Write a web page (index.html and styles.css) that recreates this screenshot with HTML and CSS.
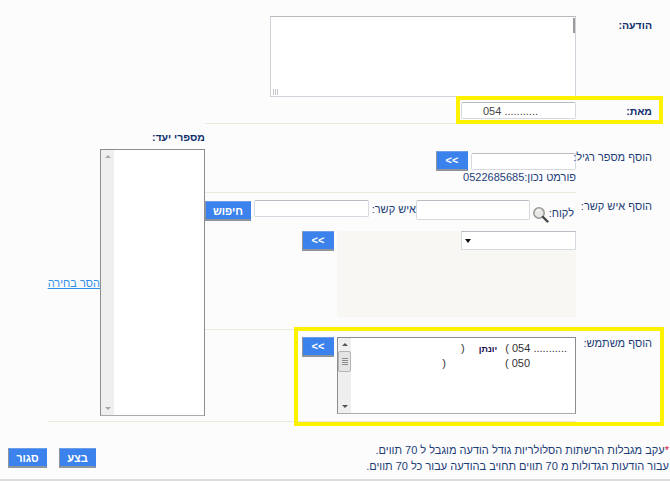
FILE: index.html
```html
<!DOCTYPE html>
<html lang="he" dir="rtl">
<head>
<meta charset="utf-8">
<title>שליחת הודעה</title>
<link rel="stylesheet" href="styles.css">
</head>
<body>
<div class="page">
  <div class="msg-row">
    <div class="label strong">הודעה:</div>
    <div class="msg-box"><textarea class="msg" aria-label="הודעה"></textarea><span class="msg-mark"></span><span class="msg-grip"></span></div>
  </div>
  <div class="from-row">
    <div class="label strong from-label">מאת:</div>
    <div class="from-cell"><input class="field from-input" value="054 ..........." dir="ltr"></div>
  </div>
  <div class="main">
    <div class="label row-a-label">הוסף מספר רגיל:</div>
    <div class="cell row-a">
      <div class="inline">
        <input class="field phone">
        <button class="btn arrow" dir="ltr">&lt;&lt;</button>
      </div>
      <div class="hint">פורמט נכון:0522685685</div>
    </div>
    <div class="target">
      <div class="strong target-title">מספרי יעד:</div>
      <div class="target-body">
        <div class="listbox tall">
          <div class="items"></div>
          <div class="sb faint"><i class="up"></i><i class="down"></i></div>
        </div>
        <a class="remove" href="#">הסר בחירה</a>
      </div>
    </div>
    <div class="label row-b-label">הוסף איש קשר:</div>
    <div class="cell row-b">
      <div class="search">
        <span class="cust-label">לקוח:</span>
        <svg class="mag" width="17" height="17" viewBox="0 0 17 17" aria-hidden="true">
          <circle cx="7" cy="7" r="5.2" fill="#e8e8e6" stroke="#9a9a98" stroke-width="1.6"/>
          <path d="M4.5 5.5a3.5 3.5 0 0 1 3-2" fill="none" stroke="#fff" stroke-width="1.2"/>
          <path d="M11 11l4.5 4.5" stroke="#444" stroke-width="2.4" stroke-linecap="round"/>
        </svg>
        <input class="field cust">
        <span class="contact-label">איש קשר:</span>
        <input class="field contact">
        <button class="btn find">חיפוש</button>
      </div>
      <div class="inline results">
        <div class="panel">
          <div class="dropdown"></div>
        </div>
        <button class="btn arrow" dir="ltr">&lt;&lt;</button>
      </div>
    </div>
    <div class="label row-c-label">הוסף משתמש:</div>
    <div class="cell row-c">
      <div class="inline">
        <div class="listbox users">
          <div class="items">
            <div class="item" dir="ltr">)<span class="gap1"></span><bdi class="name">יונתן</bdi><span class="gap2"></span>( 054 ...........</div>
            <div class="item second" dir="ltr">)<span class="gap3"></span>( 050</div>
          </div>
          <div class="sb"><i class="up"></i><b class="thumb"></b><i class="down"></i></div>
        </div>
        <button class="btn arrow" dir="ltr">&lt;&lt;</button>
      </div>
    </div>
    <div class="divider"></div>
  </div>
  <div class="footer">
    <div class="notes">
      <div><span class="star">*</span>עקב מגבלות הרשתות הסלולריות גודל הודעה מוגבל ל 70 תווים.</div>
      <div>עבור הודעות הגדולות מ 70 תווים תחויב בהודעה עבור כל 70 תווים.</div>
    </div>
    <div class="actions">
      <button class="btn action run">בצע</button>
      <button class="btn action close">סגור</button>
    </div>
  </div>
  <div class="mark mark-from"></div>
  <div class="mark mark-users"></div>
</div>
</body>
</html>
```
FILE: styles.css
```css
* { box-sizing: border-box; }
html, body { margin: 0; padding: 0; }
body { font-family: "Liberation Sans", Arial, sans-serif; font-size: 11px; color: #1d3d78; background: #fcfcfc; }
.page { position: relative; width: 670px; height: 481px; overflow: hidden; border-bottom: 2px solid #dcdcdc; background: #fcfcfc; }
.strong { font-weight: bold; color: #12306e; font-size: 10.5px; }
.label { padding-right: 18px; line-height: 14px; }
.field { height: 20px; background: #fff; border: 1px solid #d6dae0; border-top-color: #b9bcc2; border-radius: 2px; padding: 0 2px; font: 11px "Liberation Sans", Arial, sans-serif; color: #444; margin: 0; outline: none; }

.msg-row { display: flex; padding-top: 16px; height: 97px; }
.msg-row .label { width: 94px; padding-top: 2px; }
.msg-box { position: relative; width: 306px; height: 81px; }
.msg { display: block; width: 306px; height: 81px; background: #fff; border: 1px solid #cfd2d8; border-top-color: #b7b9bf; margin: 0; padding: 0; resize: none; outline: none; }
.msg-mark { position: absolute; top: 2px; right: 1px; width: 2px; height: 15px; background: #9b9b9b; }
.msg-grip { position: absolute; left: 3px; bottom: 2px; width: 6px; height: 6px; background: repeating-linear-gradient(90deg, #c4c8cc 0 1px, transparent 1px 2px); }

.from-row { display: flex; height: 27px; }
.from-label { width: 94px; padding-top: 7px; }
.from-cell { width: 371px; border-bottom: 1px solid #ece9dc; padding-top: 5px; }
.from-input { width: 115px; height: 17px; text-align: center; padding-right: 18px; display: block; }

.main { display: grid; grid-template-columns: 94px 371px 157px; grid-template-rows: 69px 137px 91px 1px; width: 622px; }
.cell { min-width: 0; }
.inline { display: flex; align-items: flex-start; gap: 3px; }

.btn { background: #3b82ec; color: #fff; border: 1px solid #3b82ec; border-bottom: 2px solid #8f959c; border-left-color: #8f959c; border-top-color: #6d9fe8; font: bold 11px "Liberation Sans", Arial, sans-serif; padding: 0; margin: 0; }
.arrow { width: 32px; height: 20px; line-height: 15px; font-size: 11px; }

.row-a-label { grid-column: 1; grid-row: 1; padding-top: 26px; white-space: nowrap; position: relative; z-index: 1; }
.row-a { grid-column: 2; grid-row: 1; padding-top: 27px; border-bottom: 1px solid #ece9dc; }
.phone { width: 105px; height: 17px; margin-top: 2px; }
.hint { margin-top: -1px; line-height: 14px; white-space: nowrap; font-size: 11px; }

.target { grid-column: 3; grid-row: 1 / 4; padding-top: 6px; }
.target-title { line-height: 14px; height: 19px; }
.target-body { display: flex; align-items: center; }
.remove { color: #2f8fe8; font-size: 11px; white-space: nowrap; }

.listbox { position: relative; display: flex; flex: none; background: #fff; border: 1px solid #8b8d92; border-bottom-color: #a9abb0; }
.tall { width: 105px; height: 267px; }
.users { width: 239px; height: 77px; }
.items { flex: 1; min-width: 0; }
.sb { width: 13px; background: #efefef; display: flex; flex-direction: column; align-items: center; padding: 5px 0; }
.sb .up, .sb .down { width: 0; height: 0; border-left: 3px solid transparent; border-right: 3px solid transparent; }
.sb .up { border-bottom: 3px solid #555; }
.sb .down { border-top: 3px solid #555; margin-top: auto; }
.faint .up { border-bottom-color: #a8a8a8; }
.faint .down { border-top-color: #a8a8a8; }
.thumb { width: 13px; height: 21px; margin-top: 5px; background: repeating-linear-gradient(#8a8a8a 0 1px, #e8e8e8 1px 2px) center / 6px 7px no-repeat, #e4e4e4; border: 1px solid #b4b4b4; border-radius: 2px; }
.item { text-align: right; padding-right: 8px; line-height: 15px; height: 15px; color: #333; white-space: pre; margin-top: 3px; }
.second { margin-top: 0; padding-right: 45px; }
.name { color: #1a1050; font-size: 9px; font-weight: bold; }
.gap1 { display: inline-block; width: 14px; }
.gap2 { display: inline-block; width: 8px; }
.gap3 { display: inline-block; width: 59px; }

.row-b-label { grid-column: 1; grid-row: 2; padding-top: 6px; white-space: nowrap; }
.row-b { grid-column: 2; grid-row: 2; padding-top: 7px; border-bottom: 1px solid #ece9dc; }
.search { display: flex; align-items: flex-start; height: 31px; }
.cust-label { width: 27px; padding-top: 6px; padding-right: 2px; line-height: 14px; }
.mag { margin-top: 6px; margin-left: 2px; }
.cust { width: 114px; }
.contact-label { width: 47px; padding-top: 2px; line-height: 14px; white-space: nowrap; }
.contact { width: 115px; height: 17px; }
.find { width: 46px; height: 20px; margin-right: 3px; margin-top: 1px; font-size: 11px; }
.panel { width: 239px; height: 86px; background: #f8f7f3; }
.dropdown { position: relative; width: 115px; height: 19px; background: #fff; border: 1px solid #d6dae0; border-top-color: #b9bcc2; }
.dropdown::after { content: ""; position: absolute; left: 3px; top: 7px; border-left: 3px solid transparent; border-right: 3px solid transparent; border-top: 4px solid #111; }

.row-c-label { grid-column: 1; grid-row: 3; padding-top: 6px; white-space: nowrap; }
.row-c { grid-column: 2; grid-row: 3; padding-top: 7px; }
.divider { grid-column: 2 / 4; grid-row: 4; background: #ece9dc; }

.footer { display: flex; justify-content: space-between; align-items: flex-start; padding-top: 20px; }
.notes { line-height: 16px; padding-right: 1px; font-size: 11px; white-space: nowrap; }
.star { color: #d01030; }
.actions { display: flex; gap: 12px; padding-left: 8px; padding-top: 6px; }
.action { height: 20px; font-size: 11px; }
.run { width: 37px; }
.close { width: 39px; }

.mark { position: absolute; border: 4px solid #fff200; pointer-events: none; }
.mark-from { left: 456px; top: 96px; width: 207px; height: 28px; }
.mark-users { left: 294px; top: 327px; width: 370px; height: 99px; }
```
